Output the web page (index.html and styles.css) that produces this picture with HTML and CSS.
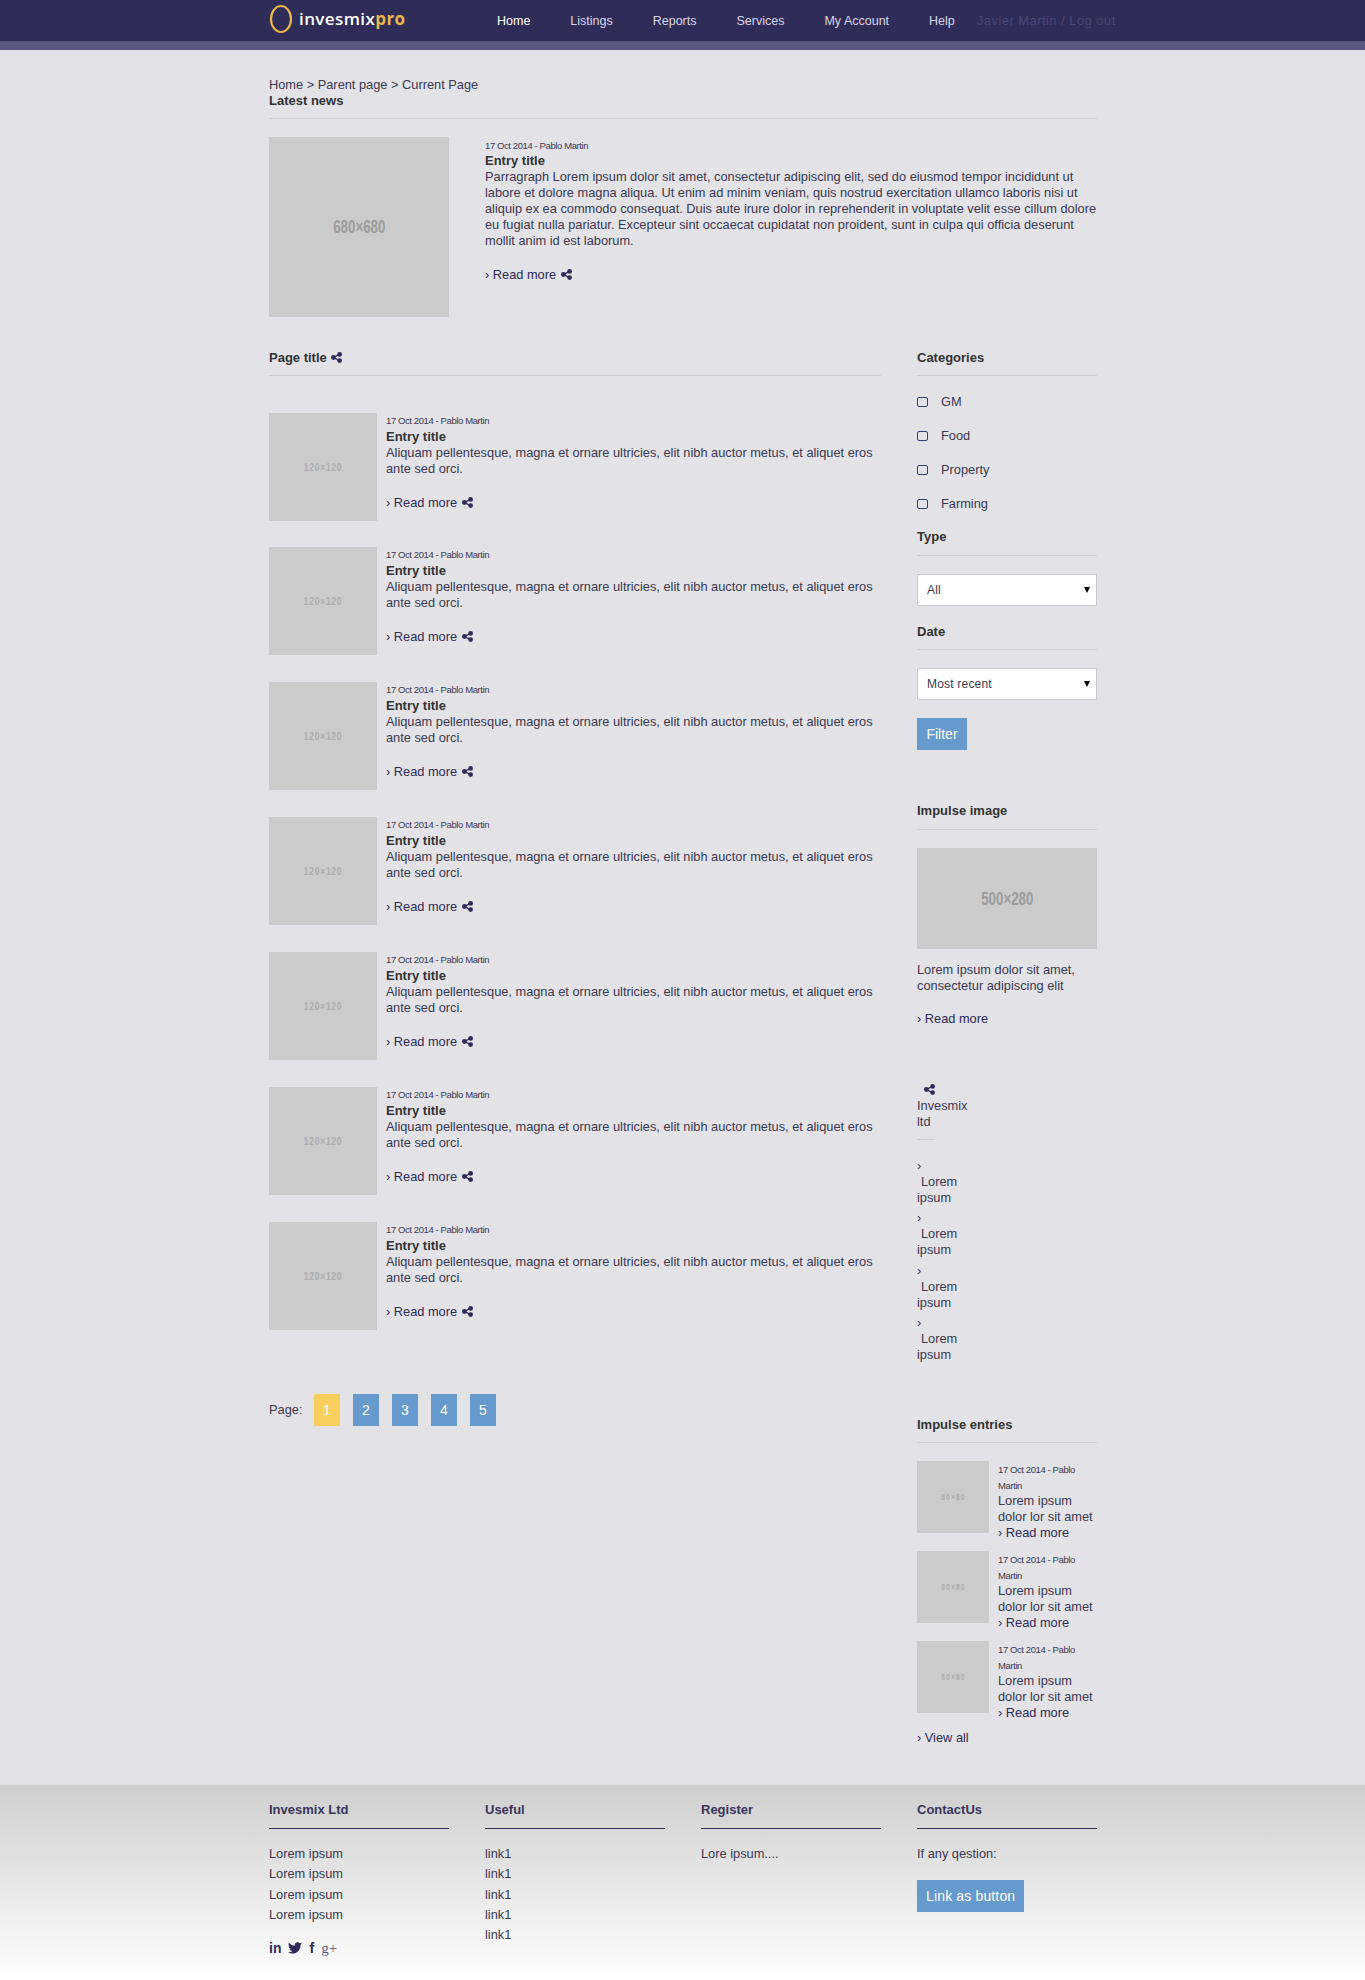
FILE: index.html
```html
<!DOCTYPE html>
<html lang="en">
  <head>
    <meta charset="UTF-8" />
    <title>Invesmix Pro</title>
    <link rel="stylesheet" href="styles.css">
  </head>
  <body>
    <svg class="defs" width="0" height="0" aria-hidden="true">
      <symbol id="share" viewBox="0 0 12 12">
        <path d="M9.5 2.5 2.5 6l7 3.500" fill="none" stroke="currentColor" stroke-width="1.500" />
        <circle cx="2.600" cy="6" r="2.600" fill="currentColor" />
        <circle cx="9.400" cy="2.600" r="2.600" fill="currentColor" />
        <circle cx="9.400" cy="9.400" r="2.600" fill="currentColor" />
      </symbol>
    </svg>

    <header class="topbar">
      <div class="wrap topbar-inner">
        <a class="logo" href="#">
          <svg width="24" height="30" viewBox="0 0 24 30" aria-hidden="true">
            <ellipse cx="12" cy="15" rx="10" ry="13" fill="none" stroke="#e9b64e" stroke-width="2.200" />
          </svg>
          <span class="logo-text">invesmix<b>pro</b></span>
        </a>
        <nav class="nav">
          <a class="active" href="#">Home</a>
          <a href="#">Listings</a>
          <a href="#">Reports</a>
          <a href="#">Services</a>
          <a href="#">My Account</a>
          <a href="#">Help</a>
        </nav>
        <a class="user" href="#">Javier Martin / Log out</a>
      </div>
    </header>

    <main class="wrap content">
      <div class="crumbs">Home &gt; Parent page &gt; Current Page</div>
      <h2 class="title">Latest news</h2>

      <article class="featured">
        <div class="ph ph-big"><span>680×680</span></div>
        <div class="featured-body">
          <div class="meta">17 Oct 2014 - Pablo Martin</div>
          <h3>Entry title</h3>
          <p>Parragraph Lorem ipsum dolor sit amet, consectetur adipiscing elit, sed do eiusmod tempor incididunt ut labore et dolore magna aliqua. Ut enim ad minim veniam, quis nostrud exercitation ullamco laboris nisi ut aliquip ex ea commodo consequat. Duis aute irure dolor in reprehenderit in voluptate velit esse cillum dolore eu fugiat nulla pariatur. Excepteur sint occaecat cupidatat non proident, sunt in culpa qui officia deserunt mollit anim id est laborum.</p>
          <a class="more" href="#">› Read more <svg class="share"><use href="#share" /></svg></a>
        </div>
      </article>

      <div class="columns">
        <section class="list">
          <h2 class="title">Page title <svg class="share"><use href="#share" /></svg></h2>

          <article class="entry">
            <div class="ph ph-mid"><span>120×120</span></div>
            <div class="entry-body">
              <div class="meta">17 Oct 2014 - Pablo Martin</div>
              <h3>Entry title</h3>
              <p>Aliquam pellentesque, magna et ornare ultricies, elit nibh auctor metus, et aliquet eros ante sed orci.</p>
              <a class="more" href="#">› Read more <svg class="share"><use href="#share" /></svg></a>
            </div>
          </article>
          <article class="entry">
            <div class="ph ph-mid"><span>120×120</span></div>
            <div class="entry-body">
              <div class="meta">17 Oct 2014 - Pablo Martin</div>
              <h3>Entry title</h3>
              <p>Aliquam pellentesque, magna et ornare ultricies, elit nibh auctor metus, et aliquet eros ante sed orci.</p>
              <a class="more" href="#">› Read more <svg class="share"><use href="#share" /></svg></a>
            </div>
          </article>
          <article class="entry">
            <div class="ph ph-mid"><span>120×120</span></div>
            <div class="entry-body">
              <div class="meta">17 Oct 2014 - Pablo Martin</div>
              <h3>Entry title</h3>
              <p>Aliquam pellentesque, magna et ornare ultricies, elit nibh auctor metus, et aliquet eros ante sed orci.</p>
              <a class="more" href="#">› Read more <svg class="share"><use href="#share" /></svg></a>
            </div>
          </article>
          <article class="entry">
            <div class="ph ph-mid"><span>120×120</span></div>
            <div class="entry-body">
              <div class="meta">17 Oct 2014 - Pablo Martin</div>
              <h3>Entry title</h3>
              <p>Aliquam pellentesque, magna et ornare ultricies, elit nibh auctor metus, et aliquet eros ante sed orci.</p>
              <a class="more" href="#">› Read more <svg class="share"><use href="#share" /></svg></a>
            </div>
          </article>
          <article class="entry">
            <div class="ph ph-mid"><span>120×120</span></div>
            <div class="entry-body">
              <div class="meta">17 Oct 2014 - Pablo Martin</div>
              <h3>Entry title</h3>
              <p>Aliquam pellentesque, magna et ornare ultricies, elit nibh auctor metus, et aliquet eros ante sed orci.</p>
              <a class="more" href="#">› Read more <svg class="share"><use href="#share" /></svg></a>
            </div>
          </article>
          <article class="entry">
            <div class="ph ph-mid"><span>120×120</span></div>
            <div class="entry-body">
              <div class="meta">17 Oct 2014 - Pablo Martin</div>
              <h3>Entry title</h3>
              <p>Aliquam pellentesque, magna et ornare ultricies, elit nibh auctor metus, et aliquet eros ante sed orci.</p>
              <a class="more" href="#">› Read more <svg class="share"><use href="#share" /></svg></a>
            </div>
          </article>
          <article class="entry">
            <div class="ph ph-mid"><span>120×120</span></div>
            <div class="entry-body">
              <div class="meta">17 Oct 2014 - Pablo Martin</div>
              <h3>Entry title</h3>
              <p>Aliquam pellentesque, magna et ornare ultricies, elit nibh auctor metus, et aliquet eros ante sed orci.</p>
              <a class="more" href="#">› Read more <svg class="share"><use href="#share" /></svg></a>
            </div>
          </article>

          <div class="pager">
            <span class="pager-label">Page:</span>
            <a class="btn current" href="#">1</a>
            <a class="btn" href="#">2</a>
            <a class="btn" href="#">3</a>
            <a class="btn" href="#">4</a>
            <a class="btn" href="#">5</a>
          </div>
        </section>

        <aside class="side">
          <h2 class="title">Categories</h2>
          <label class="check"><input type="checkbox" /> GM</label>
          <label class="check"><input type="checkbox" /> Food</label>
          <label class="check"><input type="checkbox" /> Property</label>
          <label class="check"><input type="checkbox" /> Farming</label>

          <h2 class="title type-title">Type</h2>
          <div class="select"><select><option>All</option></select></div>

          <h2 class="title">Date</h2>
          <div class="select"><select><option>Most recent</option></select></div>

          <a class="btn filter" href="#">Filter</a>

          <h2 class="title impulse">Impulse image</h2>
          <div class="ph ph-wide"><span>500×280</span></div>
          <p class="impulse-text">Lorem ipsum dolor sit amet, consectetur adipiscing elit</p>
          <a class="more" href="#">› Read more</a>

          <div class="company">
            <svg class="share"><use href="#share" /></svg>
            <h2 class="company-name">Invesmix ltd</h2>
            <ul class="company-list">
              <li><span class="arrow">›</span><span class="indent">Lorem</span> ipsum</li>
              <li><span class="arrow">›</span><span class="indent">Lorem</span> ipsum</li>
              <li><span class="arrow">›</span><span class="indent">Lorem</span> ipsum</li>
              <li><span class="arrow">›</span><span class="indent">Lorem</span> ipsum</li>
            </ul>
          </div>

          <h2 class="title entries-title">Impulse entries</h2>
          <article class="mini">
            <div class="ph ph-small"><span>80×80</span></div>
            <div class="mini-body">
              <div class="meta">17 Oct 2014 - Pablo Martin</div>
              <div>Lorem ipsum dolor lor sit amet</div>
              <a class="more" href="#">› Read more</a>
            </div>
          </article>
          <article class="mini">
            <div class="ph ph-small"><span>80×80</span></div>
            <div class="mini-body">
              <div class="meta">17 Oct 2014 - Pablo Martin</div>
              <div>Lorem ipsum dolor lor sit amet</div>
              <a class="more" href="#">› Read more</a>
            </div>
          </article>
          <article class="mini">
            <div class="ph ph-small"><span>80×80</span></div>
            <div class="mini-body">
              <div class="meta">17 Oct 2014 - Pablo Martin</div>
              <div>Lorem ipsum dolor lor sit amet</div>
              <a class="more" href="#">› Read more</a>
            </div>
          </article>
          <a class="more view-all" href="#">› View all</a>
        </aside>
      </div>
    </main>

    <footer class="footer">
      <div class="wrap footer-grid">
        <div>
          <h4>Invesmix Ltd</h4>
          <ul>
            <li>Lorem ipsum</li>
            <li>Lorem ipsum</li>
            <li>Lorem ipsum</li>
            <li>Lorem ipsum</li>
          </ul>
          <div class="social">
            <span class="soc-in">in</span>
            <svg width="14" height="12" viewBox="0 0 24 20" aria-hidden="true"><path fill="currentColor" d="M24 2.4a9.8 9.8 0 0 1-2.8.8A4.9 4.9 0 0 0 23.300.5a9.800 9.800 0 0 1-3.100 1.200A4.900 4.900 0 0 0 11.800 6.200 13.900 13.900 0 0 1 1.700.9a4.900 4.900 0 0 0 1.500 6.600 4.900 4.900 0 0 1-2.200-.6v.1a4.900 4.900 0 0 0 3.900 4.800 4.900 4.900 0 0 1-2.200.1 4.900 4.900 0 0 0 4.600 3.400A9.900 9.900 0 0 1 0 17.300 13.900 13.900 0 0 0 7.500 19.500c9.100 0 14-7.500 14-14v-.6A10 10 0 0 0 24 2.400z" /></svg>
            <span class="soc-f">f</span>
            <span class="soc-g">g+</span>
          </div>
        </div>
        <div>
          <h4>Useful</h4>
          <ul>
            <li>link1</li>
            <li>link1</li>
            <li>link1</li>
            <li>link1</li>
            <li>link1</li>
          </ul>
        </div>
        <div>
          <h4>Register</h4>
          <ul>
            <li>Lore ipsum....</li>
          </ul>
        </div>
        <div>
          <h4>ContactUs</h4>
          <ul>
            <li>If any qestion:</li>
          </ul>
          <a class="btn link-btn" href="#">Link as button</a>
        </div>
      </div>
    </footer>
  </body>
</html>
```

FILE: styles.css
```css
* {
  box-sizing: border-box;
}
html,
body {
  margin: 0;
  padding: 0;
}
body {
  font-family: "Liberation Sans", Arial, sans-serif;
  font-size: 12.800px;
  line-height: 16px;
  color: #3b3950;
  background: #e2e2e7;
}
a {
  color: #2f2c58;
  text-decoration: none;
}
h2,
h3,
h4,
p,
ul {
  margin: 0;
  padding: 0;
}
ul {
  list-style: none;
}
.defs {
  position: absolute;
}
.wrap {
  width: 828px;
  margin-left: 269px;
}

/* top bar */
.topbar {
  height: 50px;
  background: #2f2c58;
  border-bottom: 9px solid #5b5680;
}
.topbar-inner {
  display: flex;
  align-items: center;
  height: 41px;
}
.logo {
  display: flex;
  flex: none;
  align-items: center;
  width: 228px;
  gap: 6px;
  color: #fff;
  margin-top: -3px;
}
.logo-text {
  font-family: "Open Sans", sans-serif;
  font-size: 17px;
  font-weight: 600;
  letter-spacing: 0.4px;
}
.logo-text b {
  color: #e9b64e;
  font-weight: 700;
}
.nav {
  display: flex;
  flex: none;
  gap: 40px;
}
.nav a {
  color: #d8d7e6;
  font-size: 12.500px;
  white-space: nowrap;
}
.nav a.active {
  color: #fff;
}
.user {
  flex: none;
  margin-left: 22px;
  font-size: 13px;
  letter-spacing: 0.45px;
  white-space: nowrap;
  color: #4a4875;
}

/* content */
.content {
  padding-top: 27px;
}
.title {
  font-size: 13px;
  line-height: 16px;
  font-weight: bold;
  color: #333;
  padding-bottom: 9px;
  border-bottom: 1px solid #cdcdd2;
  margin-bottom: 18px;
}
.share {
  display: inline-block;
  width: 11px;
  height: 11px;
  margin-left: 1px;
  vertical-align: -1px;
  color: #2f2c58;
}
.ph {
  display: flex;
  align-items: center;
  justify-content: center;
  flex: none;
  background: #cbcbcb;
  color: #9c9c9c;
  font-weight: bold;
}
.ph span {
  display: inline-block;
  transform: scaleX(0.74);
}
.ph-big {
  width: 180px;
  height: 180px;
  font-size: 18px;
}
.ph-mid {
  width: 108px;
  height: 108px;
  font-size: 11.500px;
  letter-spacing: 1px;
  color: #adadad;
}
.ph-wide {
  width: 180px;
  height: 101px;
  font-size: 18px;
}
.ph-small {
  width: 72px;
  height: 72px;
  font-size: 9px;
  letter-spacing: 1.500px;
  color: #adadad;
}
.meta {
  font-size: 9.500px;
  letter-spacing: -0.4px;
}
h3 {
  font-size: 13px;
  font-weight: bold;
  color: #333;
}
.more {
  display: block;
}
.featured {
  display: flex;
  gap: 36px;
  margin-bottom: 33px;
}
.featured-body {
  padding-top: 1px;
}
.featured-body .meta {
  margin-bottom: -1px;
}
.featured-body p {
  margin-bottom: 18px;
}
.columns {
  display: grid;
  grid-template-columns: 612px 180px;
  gap: 36px;
}
.entry {
  display: flex;
  gap: 9px;
  margin-bottom: 26.850px;
}
.entry-body p {
  margin-bottom: 18px;
}
.list .title {
  margin-bottom: 36.600px;
}
.pager {
  display: flex;
  align-items: center;
  gap: 13px;
  margin-top: 64.300px;
}
.pager-label {
  width: 32px;
}
.btn {
  display: inline-block;
  height: 32px;
  line-height: 32px;
  padding: 0 9px;
  background: #6699cc;
  color: #fff;
  font-size: 14px;
  text-align: center;
}
.pager .btn {
  width: 26px;
  padding: 0;
}
.btn.current {
  background: #f8cf5c;
}

/* sidebar */
.check {
  display: flex;
  align-items: center;
  gap: 13px;
  margin-bottom: 18px;
}
.check input {
  appearance: none;
  width: 11px;
  height: 10px;
  margin: -1px 0 0;
  border: 1px solid #2f3f78;
  border-radius: 2px;
  background: #e2e2e7;
}
.type-title {
  margin-top: -1px;
  padding-bottom: 10px;
}
.select {
  position: relative;
  margin-bottom: 18px;
}
.select select {
  appearance: none;
  display: block;
  width: 100%;
  height: 32px;
  padding: 0 9px;
  border: 1px solid #c9c9ce;
  border-radius: 0;
  background: #fff;
  font: 12px "Liberation Sans", sans-serif;
  letter-spacing: 0.2px;
  color: #3b3950;
}
.select::after {
  content: "";
  position: absolute;
  right: 7px;
  top: 13px;
  border: 3.500px solid transparent;
  border-top: 6px solid #000;
  border-bottom: 0;
}
.filter {
  display: block;
  width: 50px;
  margin-top: 18px;
  padding: 0;
}
.impulse {
  margin-top: 53px;
  padding-bottom: 10px;
}
.impulse-text {
  margin-top: 13px;
  margin-bottom: 17px;
}
.company {
  margin-top: 57px;
}
.company .share {
  display: block;
  margin: 2px 0 3px 7px;
}
.company-name {
  position: relative;
  width: 60px;
  font-size: 12.800px;
  font-weight: normal;
  padding-bottom: 10px;
  margin-bottom: 18px;
}
.company-name::after {
  content: "";
  position: absolute;
  left: 0;
  bottom: 0;
  width: 18px;
  border-bottom: 1px solid #cdcdd2;
}
.company-list li {
  width: 60px;
  margin-bottom: 4.300px;
}
.arrow {
  display: block;
}
.indent {
  margin-left: 4px;
}
.entries-title {
  margin-top: 54px;
}
.mini {
  display: flex;
  gap: 9px;
  height: 90px;
}
.mini-body {
  padding-top: 1px;
}
.mini-body .meta {
  margin-bottom: -1px;
}
.view-all {
  margin-top: -1px;
}

/* footer */
.footer {
  height: 196px;
  margin-top: 39px;
  padding-top: 17px;
  background: linear-gradient(#cfcfcf, #ffffff);
}
.footer-grid {
  display: grid;
  grid-template-columns: repeat(4, 180px);
  gap: 36px;
}
.footer h4 {
  font-size: 13px;
  font-weight: bold;
  color: #3a3658;
  padding-bottom: 10px;
  border-bottom: 1px solid #2f2c58;
  margin: 0 0 17px;
}
.footer li {
  margin-bottom: 4.400px;
}
.social {
  display: flex;
  align-items: center;
  gap: 7px;
  margin-top: 17px;
  color: #2f2c58;
}
.soc-in,
.soc-f {
  font-weight: bold;
  font-size: 14px;
}
.soc-g {
  font-family: "Liberation Serif", serif;
  font-size: 15px;
  color: #5a5780;
}
.link-btn {
  margin-top: 14px;
  letter-spacing: 0.15px;
}
```
